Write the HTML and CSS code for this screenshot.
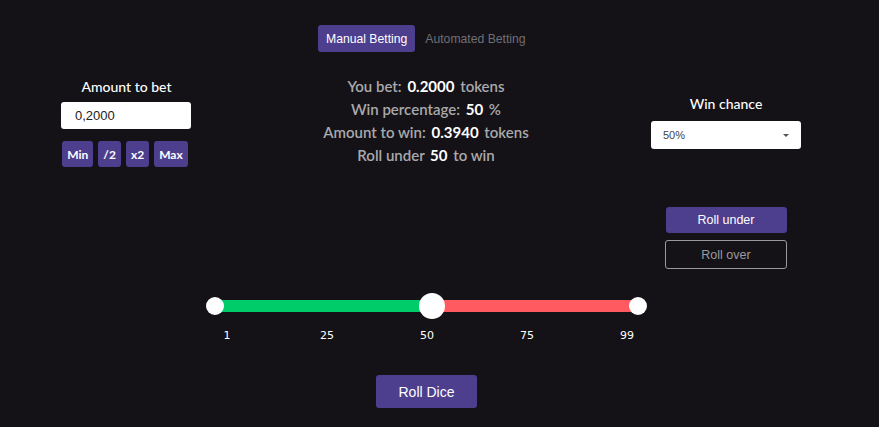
FILE: index.html
```html
<!DOCTYPE html>
<html>
<head>
<meta charset="utf-8">
<link rel="stylesheet" href="styles.css">
</head>
<body>
<div class="page">
  <div class="tabs">
    <button class="tab tab-active">Manual Betting</button>
    <button class="tab">Automated Betting</button>
  </div>
  <div class="top">
    <div class="col-left">
      <div class="label">Amount to bet</div>
      <div class="input">0,2000</div>
      <div class="quick">
        <button class="qbtn">Min</button>
        <button class="qbtn">/2</button>
        <button class="qbtn">x2</button>
        <button class="qbtn">Max</button>
      </div>
    </div>
    <div class="col-center">
      <div class="line">You bet: <b>0.2000</b> tokens</div>
      <div class="line">Win percentage: <b>50</b> %</div>
      <div class="line">Amount to win: <b>0.3940</b> tokens</div>
      <div class="line">Roll under <b>50</b> to win</div>
    </div>
    <div class="col-right">
      <div class="label label-right">Win chance</div>
      <div class="select"><span>50%</span><span class="caret"></span></div>
      <div class="rolls">
        <button class="roll roll-under">Roll under</button>
        <button class="roll roll-over">Roll over</button>
      </div>
    </div>
  </div>
  <div class="slider">
    <div class="track"></div>
    <span class="dot dot-start"></span>
    <span class="knob"></span>
    <span class="dot dot-end"></span>
  </div>
  <div class="ticks">
    <span>1</span><span>25</span><span>50</span><span>75</span><span>99</span>
  </div>
  <div class="dice-row">
    <button class="dice">Roll Dice</button>
  </div>
</div>
</body>
</html>
```
FILE: styles.css
```css
* { box-sizing: border-box; }
html, body { margin: 0; padding: 0; }
body {
  background: #141217;
  width: 879px;
  height: 427px;
  overflow: hidden;
  font-family: Lato, "Liberation Sans", sans-serif;
  color: #fff;
}
button { font: inherit; cursor: pointer; }
.page { padding-top: 25px; }
.tabs {
  display: flex;
  gap: 2px;
  padding-left: 318px;
  height: 27px;
}
.tab {
  border: 0;
  border-radius: 3px;
  background: transparent;
  color: #6f6f74;
  font-family: "Liberation Sans", Arial, sans-serif;
  font-size: 12.2px;
  padding: 0 8px;
  height: 27px;
}
.tab-active { background: #4e3e8e; color: #fff; }

.top { display: flex; }
.col-left {
  width: 253px;
  display: flex;
  flex-direction: column;
  align-items: center;
  padding-top: 26px;
}
.label {
  font-size: 14px;
  font-weight: 500;
  line-height: 17px;
  color: #fff;
}
.input {
  margin-top: 7px;
  margin-left: -1px;
  width: 130px;
  height: 27px;
  background: #fff;
  border-radius: 3px;
  color: #222;
  font-family: "Liberation Sans", Arial, sans-serif;
  font-size: 13px;
  line-height: 27px;
  padding-left: 14px;
}
.quick {
  display: flex;
  gap: 5px;
  margin-top: 12px;
  margin-left: -3px;
}
.qbtn {
  border: 0;
  border-radius: 3px;
  background: #4e3e8e;
  color: #fff;
  font-weight: 700;
  font-size: 12px;
  height: 26px;
  padding: 0 5px;
}
.col-center {
  width: 346px;
  text-align: center;
  padding-top: 23px;
}
.line {
  font-size: 15px;
  font-weight: 600;
  line-height: 23px;
  color: #a9a9ab;
}
.line b { color: #fff; font-weight: 700; margin: 0 2px; }
.col-right {
  width: 254px;
  display: flex;
  flex-direction: column;
  align-items: center;
  padding-top: 43px;
}
.select {
  margin-top: 9px;
  width: 150px;
  height: 28px;
  background: #fff;
  border-radius: 3px;
  display: flex;
  align-items: center;
  justify-content: space-between;
  padding: 0 12px 0 12px;
  font-family: "Liberation Sans", Arial, sans-serif;
  font-size: 11px;
  color: #444;
}
.caret {
  width: 0; height: 0;
  border-left: 3px solid transparent;
  border-right: 3px solid transparent;
  border-top: 3px solid #555;
}
.rolls {
  margin-top: 58px;
  display: flex;
  flex-direction: column;
  align-items: center;
  gap: 7px;
}
.roll {
  width: 121px;
  height: 26px;
  border-radius: 3px;
  font-family: "Liberation Sans", Arial, sans-serif;
  font-size: 12.5px;
}
.roll-under { background: #4e3e8e; color: #fff; border: 0; }
.roll-over {
  width: 122px;
  height: 29px;
  background: transparent;
  color: #9a9a9d;
  border: 1px solid #9a9a9d;
}
.slider {
  position: relative;
  margin-top: 24px;
  margin-left: 206px;
  width: 441px;
  height: 26px;
}
.track {
  position: absolute;
  left: 9px; right: 9px;
  top: 7px;
  height: 12px;
  background: linear-gradient(to right, #00cc6a 0, #00cc6a 217px, #ff5a5f 217px, #ff5a5f 100%);
}
.dot {
  position: absolute;
  top: 4px;
  width: 18px; height: 18px;
  border-radius: 50%;
  background: #fff;
}
.dot-start { left: 0; }
.dot-end { right: 0; }
.knob {
  position: absolute;
  top: 0;
  left: 213px;
  width: 26px; height: 26px;
  border-radius: 50%;
  background: #fff;
}
.ticks {
  display: flex;
  margin-left: 177px;
  margin-top: 9px;
}
.ticks span {
  width: 100px;
  text-align: center;
  font-family: "DejaVu Sans", Verdana, sans-serif;
  font-size: 11px;
  line-height: 16px;
  color: #fff;
}
.dice-row {
  padding-left: 376px;
  margin-top: 31px;
}
.dice {
  width: 101px;
  height: 33px;
  border: 0;
  border-radius: 3px;
  background: #4e3e8e;
  color: #fff;
  font-family: "Liberation Sans", Arial, sans-serif;
  font-size: 14px;
}
```
